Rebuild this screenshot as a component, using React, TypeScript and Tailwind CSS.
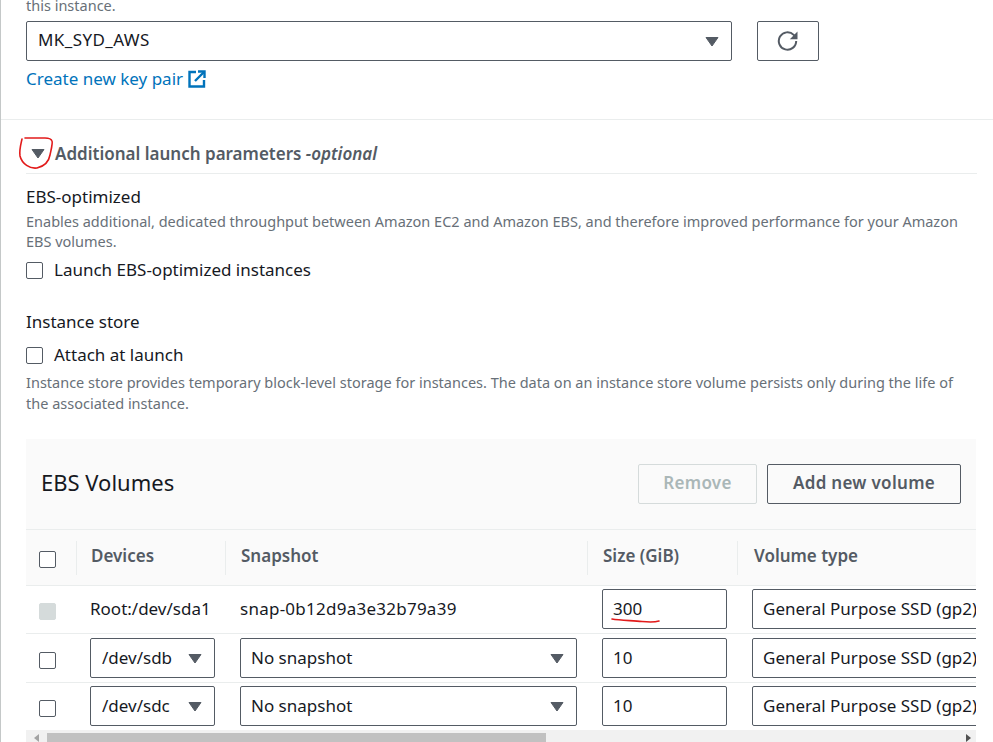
import React from "react";

const Caret = ({ className = "" }: { className?: string }) => (
  <svg viewBox="0 0 14 11" className={"w-[14px] h-[11px] " + className}>
    <path d="M1 1.5h12L7 10z" fill="#545b64" stroke="#545b64" strokeLinejoin="round" />
  </svg>
);

const Check = ({ disabled = false }: { disabled?: boolean }) => (
  <div className={"w-[17px] h-[17px] rounded-[2px] border " + (disabled ? "bg-[#d5dbdb] border-[#d5dbdb]" : "bg-white border-[#545b64]")} />
);

const Box = ({ w, children, caret = false, pad = "pl-[10px]" }: { w: string; children: React.ReactNode; caret?: boolean; pad?: string }) => (
  <div className={"h-10 flex items-center justify-between bg-white border border-[#545b64] rounded-[2px] pr-[12px] shrink-0 " + w + " " + pad}>
    <span className="whitespace-nowrap">{children}</span>
    {caret && <Caret />}
  </div>
);

const TypeBox = () => (
  <div className="h-10 w-[240px] shrink-0 flex items-center bg-white border border-[#545b64] rounded-l-[2px] pl-[10px] whitespace-nowrap">General Purpose SSD (gp2)</div>
);

const Head = ({ w, children, pl = "pl-[15px]" }: { w: string; children?: React.ReactNode; pl?: string }) => (
  <div className={"shrink-0 h-[34px] flex items-center border-l border-[#eaeded] font-semibold text-[#545b64] whitespace-nowrap " + w + " " + pl}>
    <span className="-translate-y-[2px]">{children}</span>
  </div>
);

const Row = ({ dev, h, pb = "" }: { dev: string; h: string; pb?: string }) => (
  <div className={"flex items-center bg-white " + h + " " + pb}>
    <div className="w-[13px] shrink-0" />
    <div className="w-[51px] shrink-0 pt-[4px]"><Check /></div>
    <div className="w-[150px] shrink-0"><Box w="w-[125px]" caret pad="pl-[11px]">{dev}</Box></div>
    <div className="w-[362px] shrink-0"><Box w="w-[337px]" caret>No snapshot</Box></div>
    <div className="w-[150px] shrink-0"><Box w="w-[125px]">10</Box></div>
    <TypeBox />
  </div>
);

export default function App() {
  return (
    <div className="w-[993px] h-[742px] overflow-hidden bg-white text-[#16191f] text-[17px] leading-[22px] border-l-[1px] border-[#c4c8c8] font-['Noto_Sans',sans-serif]">
      <div className="pl-[25px] pr-[16px] h-[120px] border-b border-[#eaeded]">
        <div className="text-[14.5px] text-[#687078] leading-[11px] h-[21px]">this instance.</div>
        <div className="flex items-center gap-[25px]">
          <div className="w-[706px] h-10 flex items-center justify-between border border-[#545b64] rounded-[2px] pl-[11px] pr-[12px]">
            <span className="tracking-[0.4px] -translate-y-[1px]">MK_SYD_AWS</span>
            <Caret />
          </div>
          <div className="w-[62px] h-10 flex items-center justify-center border border-[#545b64] rounded-[2px]">
            <svg viewBox="0 0 22 22" className="w-[22px] h-[22px]" fill="none" stroke="#545b64" strokeWidth="2">
              <path d="M19.2 11a8.700 8.700 0 1 1-2.500-6.100L19 7.200" />
              <path d="M20.500 1.500v7.700h-7.700z" fill="#545b64" stroke="none" />
            </svg>
          </div>
        </div>
        <div className="mt-[7px] flex items-center gap-[5px] text-[#0073bb]">
          <span>Create new key pair</span>
          <svg viewBox="0 0 18 18" className="w-[18px] h-[18px]" fill="none" stroke="#0073bb" strokeWidth="2.4">
            <path d="M8 2H1.500v14.500H16V10" />
            <path d="M7 11 16 2" />
            <path d="M10 1.500h6.500V8" />
          </svg>
        </div>
      </div>

      <div className="pl-[25px] pr-[16px]">
        <div className="relative h-[54px] flex items-center border-b border-[#eaeded] pl-[5px] pt-[14px] gap-[10px]">
          <Caret />
          <div className="font-semibold text-[#545b64] whitespace-nowrap">Additional launch parameters <span className="italic font-semibold">-optional</span></div>
          <svg className="absolute -left-[8px] top-[15px] w-[36px] h-[36px] overflow-visible" viewBox="0 0 36 36" fill="none" stroke="#e21b1b" strokeWidth="1.600" strokeLinecap="round">
            <path d="M4 4C3 9 1 15 2 21c2 8 10 13 17 12 8-2 12-7 13-13 1-5 3-12 2-14-1-3-5-3-7-3H7" />
          </svg>
        </div>

        <div className="mt-[12px]">EBS-optimized</div>
        <div className="text-[14.5px] leading-[20px] mt-[3px] text-[#687078]">Enables additional, dedicated throughput between Amazon EC2 and Amazon EBS, and therefore improved performance for your Amazon<br />EBS volumes.</div>
        <div className="flex items-center gap-[11px] mt-[8px] h-[22px]"><Check /><span>Launch EBS-optimized instances</span></div>

        <div className="mt-[30px]">Instance store</div>
        <div className="flex items-center gap-[11px] mt-[11px] h-[22px]"><Check /><span>Attach at launch</span></div>
        <div className="text-[14.5px] leading-[21px] mt-[6px] text-[#687078]">Instance store provides temporary block-level storage for instances. The data on an instance store volume persists only during the life of<br />the associated instance.</div>

        <div className="mt-[25px] bg-[#fafafa] w-[950px] h-[303px] overflow-hidden">
          <div className="h-[91px] flex items-center justify-between border-b border-[#eaeded] pl-[15px] pr-[15px]">
            <div className="text-[22px] leading-[28px] -translate-y-[2px]">EBS Volumes</div>
            <div className="flex gap-[10px] font-semibold tracking-[0.3px]">
              <div className="w-[119px] h-10 flex items-center justify-center border border-[#d5dbdb] rounded-[2px] text-[#aab7b8]"><span className="-translate-y-[1px]">Remove</span></div>
              <div className="w-[194px] h-10 flex items-center justify-center border border-[#545b64] rounded-[2px] text-[#545b64]"><span className="-translate-y-[1px]">Add new volume</span></div>
            </div>
          </div>
          <div className="flex items-center h-[56px] border-b border-[#eaeded]">
            <div className="w-[13px] shrink-0" />
            <div className="w-[37px] shrink-0 pt-[4px]"><Check /></div>
            <Head w="w-[149px]" pl="pl-[14px]">Devices</Head>
            <Head w="w-[362px]">Snapshot</Head>
            <Head w="w-[150px]">Size (GiB)</Head>
            <Head w="w-[240px]" pl="pl-[16px]">Volume type</Head>
          </div>
          <div className="flex items-center bg-white h-[48px] pb-[1px] border-b border-[#eaeded]">
            <div className="w-[13px] shrink-0" />
            <div className="w-[51px] shrink-0 pt-[4px]"><Check disabled /></div>
            <div className="w-[150px] shrink-0">Root:/dev/sda1</div>
            <div className="w-[362px] shrink-0 tracking-[0.25px]">snap-0b12d9a3e32b79a39</div>
            <div className="w-[150px] shrink-0 relative">
              <Box w="w-[125px]">300</Box>
              <svg className="absolute left-[9px] top-[28px] w-[50px] h-[8px]" viewBox="0 0 50 8" fill="none" stroke="#e21b1b" strokeWidth="1.600" strokeLinecap="round">
                <path d="M1 2c8 1.500 20 1.500 30 2.500 5 .5 12 1 17-.5" />
              </svg>
            </div>
            <TypeBox />
          </div>
          <div className="border-b border-[#eaeded]"><Row dev="/dev/sdb" h="h-[48px]" /></div>
          <Row dev="/dev/sdc" h="h-[47px]" pb="pb-[1px]" />
          <div className="h-[12px] bg-[#f1f1f1] flex items-stretch relative">
            <div className="w-[21px] shrink-0 relative">
              <div className="absolute left-[8px] top-[4px] w-0 h-0 border-y-[4px] border-y-transparent border-r-[5px] border-r-[#a3a3a3]" />
            </div>
            <div className="w-[499px] bg-[#c1c1c1] mt-[3px]" />
            <div className="absolute right-[5px] top-[4px] w-0 h-0 border-y-[4px] border-y-transparent border-l-[5px] border-l-[#505050]" />
          </div>
        </div>
      </div>
    </div>
  );
}
